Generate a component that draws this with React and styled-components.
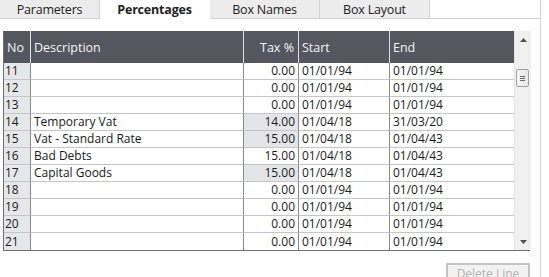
import React from 'react';
import styled, { createGlobalStyle } from 'styled-components';

const Global = createGlobalStyle`
  html, body {
    margin: 0;
    padding: 0;
    background: #ffffff;
  }
  body {
    font-family: 'Open Sans', 'Noto Sans', sans-serif;
    font-size: 12px;
    color: #1a1a1a;
  }
`;

const Window = styled.div`
  width: 549px;
  height: 277px;
  overflow: hidden;
  background: #ffffff;
`;

const TabBar = styled.div`
  display: flex;
  height: 19px;
`;

const Tab = styled.div`
  width: ${(p) => p.w}px;
  box-sizing: border-box;
  display: flex;
  align-items: center;
  justify-content: center;
  font-size: 12.5px;
  letter-spacing: -0.2px;
  background: ${(p) => (p.active ? '#ffffff' : '#ececec')};
  font-weight: ${(p) => (p.active ? 700 : 400)};
  color: #222;
  border-right: 1px solid ${(p) => (p.active ? 'transparent' : '#d4d4d4')};
  border-bottom: 1px solid ${(p) => (p.active ? 'transparent' : '#d4d4d4')};
`;

const TabFill = styled.div`
  width: 111px;
  box-sizing: border-box;
  border-bottom: 1px solid #d0d0d0;
  border-right: 1px solid #d0d0d0;
  height: 19px;
`;

const Panel = styled.div`
  width: 541px;
  height: 258px;
  box-sizing: border-box;
  border-right: 1px solid #d6d6d6;
  padding: 12px 0 0 3px;
  display: flex;
  flex-direction: column;
`;

const Grid = styled.div`
  display: grid;
  grid-template-columns: 26px 213px 55px 91px 125px 17px;
  grid-template-rows: 32px repeat(11, 17px);
  width: 527px;
  box-sizing: border-box;
  border-left: 1px solid #6f6f6f;
  border-right: 1px solid #6f6f6f;
  border-bottom: 1px solid #6f6f6f;
`;

const Head = styled.div`
  background: #545760;
  color: #f4f4f4;
  font-size: 12.5px;
  display: flex;
  align-items: center;
  justify-content: ${(p) => (p.right ? 'flex-end' : 'flex-start')};
  padding: 0 ${(p) => (p.right ? '4px' : '0')} 0 3px;
  border-left: ${(p) => (p.first ? 'none' : '1px solid #e0e0e0')};
  box-sizing: border-box;
  white-space: nowrap;
`;

const Cell = styled.div`
  box-sizing: border-box;
  border-bottom: 1px solid #c6c6c6;
  border-left: 1px solid #8a8a8a;
  background: ${(p) => (p.shade ? '#e4e5e9' : '#ffffff')};
  display: flex;
  align-items: center;
  justify-content: ${(p) => (p.right ? 'flex-end' : 'flex-start')};
  padding: 0 ${(p) => (p.right ? '3px' : '0')} 0 ${(p) => (p.right ? '0' : '3px')};
  font-size: 12px;
  line-height: 16px;
  white-space: nowrap;
  &:nth-last-child(-n + 5) {
    border-bottom: none;
  }
`;

const NoCell = styled(Cell)`
  background: #e6e7eb;
  border-left: none;
  padding-left: 1px;
`;

const Scroll = styled.div`
  grid-column: 6;
  grid-row: 1 / span 12;
  background: #f0f0f0;
  border-left: 1px solid #e4e4e4;
  position: relative;
  display: flex;
  flex-direction: column;
  align-items: center;
`;

const Arrow = styled.div`
  height: 17px;
  display: flex;
  align-items: center;
  justify-content: center;
  width: 100%;
`;

const Track = styled.div`
  flex: 1;
`;

const Thumb = styled.div`
  position: absolute;
  top: 38px;
  left: 1px;
  width: 13px;
  height: 18px;
  box-sizing: border-box;
  border: 1px solid #a2a2a2;
  border-radius: 2px;
  background: linear-gradient(to right, #f6f6f6, #e6e6e6);
  display: flex;
  flex-direction: column;
  align-items: center;
  justify-content: center;
  gap: 1px;
  & > i {
    display: block;
    width: 5px;
    height: 1px;
    background: #6a6a6a;
  }
`;

const Footer = styled.div`
  display: flex;
  justify-content: flex-end;
  padding: 12px 0 0 0;
  width: 527px;
`;

const Button = styled.div`
  width: 84px;
  height: 20px;
  box-sizing: border-box;
  border: 2px solid #c4c4c4;
  background: #f2f2f2;
  color: #b4b4b4;
  font-size: 12px;
  display: flex;
  align-items: center;
  justify-content: center;
`;

const rows = [
  [11, '', '0.00', '01/01/94', '01/01/94', false],
  [12, '', '0.00', '01/01/94', '01/01/94', false],
  [13, '', '0.00', '01/01/94', '01/01/94', false],
  [14, 'Temporary Vat', '14.00', '01/04/18', '31/03/20', true],
  [15, 'Vat - Standard Rate', '15.00', '01/04/18', '01/04/43', true],
  [16, 'Bad Debts', '15.00', '01/04/18', '01/04/43', false],
  [17, 'Capital Goods', '15.00', '01/04/18', '01/04/43', true],
  [18, '', '0.00', '01/01/94', '01/01/94', false],
  [19, '', '0.00', '01/01/94', '01/01/94', false],
  [20, '', '0.00', '01/01/94', '01/01/94', false],
  [21, '', '0.00', '01/01/94', '01/01/94', false],
];

export default function App() {
  return (
    <Window>
      <Global />
      <TabBar>
        <Tab w={100}>Parameters</Tab>
        <Tab w={110} active>Percentages</Tab>
        <Tab w={110}>Box Names</Tab>
        <Tab w={110}>Box Layout</Tab>
        <TabFill />
      </TabBar>
      <Panel>
        <Grid>
          <Head first>No</Head>
          <Head>Description</Head>
          <Head right>Tax %</Head>
          <Head>Start</Head>
          <Head>End</Head>
          <Scroll>
            <Arrow>
              <svg width="7" height="4" viewBox="0 0 7 4">
                <path d="M0 4 L3.5 0 L7 4 Z" fill="#505050" />
              </svg>
            </Arrow>
            <Thumb>
              <i />
              <i />
              <i />
            </Thumb>
            <Track />
            <Arrow>
              <svg width="7" height="4" viewBox="0 0 7 4">
                <path d="M0 0 L3.5 4 L7 0 Z" fill="#505050" />
              </svg>
            </Arrow>
          </Scroll>
          {rows.map(([no, desc, tax, start, end, shade]) => (
            <React.Fragment key={no}>
              <NoCell>{no}</NoCell>
              <Cell>{desc}</Cell>
              <Cell right shade={shade}>{tax}</Cell>
              <Cell>{start}</Cell>
              <Cell>{end}</Cell>
            </React.Fragment>
          ))}
        </Grid>
        <Footer>
          <Button>Delete Line</Button>
        </Footer>
      </Panel>
    </Window>
  );
}
